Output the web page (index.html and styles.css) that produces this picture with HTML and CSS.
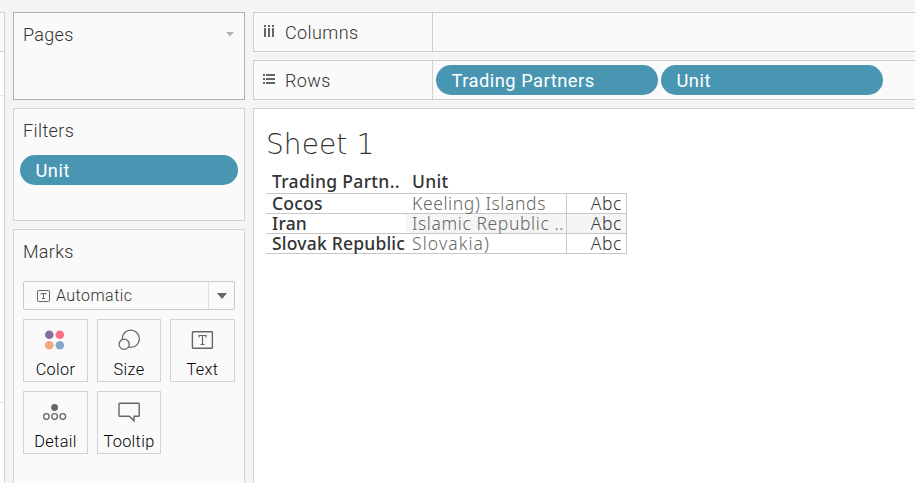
FILE: index.html
```
<!DOCTYPE html>
<html lang="en">
<head>
<meta charset="utf-8">
<title>Sheet 1</title>
<link rel="stylesheet" href="styles.css">
</head>
<body>
<div class="app">
  <aside class="edge"><div class="edge-head"></div><div class="edge-field"></div><div class="edge-list"></div></aside>
  <section class="side">
    <div class="panel pages"><h2>Pages</h2><svg class="caret" width="8" height="5" viewBox="0 0 8 5"><path d="M0 0h8L4 4.5z" fill="#b4b4b4"/></svg></div>
    <div class="panel filters"><h2 class="wide">Filters</h2><div class="pill">Unit</div></div>
    <div class="panel marks">
      <h2>Marks</h2>
      <div class="select">
        <svg width="13" height="12" viewBox="0 0 13 12"><rect x=".5" y=".5" width="12" height="11" rx=".7" fill="none" stroke="#666"/><path d="M4 4.5v-1h5v1M6.5 3.5v5M5 8.5h3" fill="none" stroke="#666"/></svg>
        <span class="select-label">Automatic</span>
        <span class="select-arrow"><svg width="10" height="6" viewBox="0 0 10 6"><path d="M0 0h10L5 6z" fill="#666"/></svg></span>
      </div>
      <div class="cards">
        <div class="card odd"><svg width="34" height="24" viewBox="0 0 34 24"><circle cx="11.3" cy="6.8" r="4.3" fill="#866f98"/><circle cx="21.8" cy="6.8" r="4.3" fill="#fb7080"/><circle cx="11.3" cy="17.3" r="4.3" fill="#f2a77d"/><circle cx="21.8" cy="17.3" r="4.3" fill="#82a6cd"/></svg><span>Color</span></div>
        <div class="card"><svg width="34" height="24" viewBox="0 0 34 24" fill="none" stroke="#666" stroke-width="1.3"><circle cx="18.8" cy="10.8" r="8.6"/><circle cx="12.2" cy="16.3" r="5.1" fill="#fafafa"/></svg><span>Size</span></div>
        <div class="card odd"><svg width="34" height="24" viewBox="0 0 34 24" fill="none" stroke="#666"><rect x="7.4" y="3.7" width="20" height="16.6" rx=".7" stroke-width="1.4"/><path d="M14 9.5v-2h7v2M17.5 7.5v9M15.5 16.5h4" stroke-width="1.2"/></svg><span>Text</span></div>
        <div class="card odd"><svg width="34" height="24" viewBox="0 0 34 24" fill="none" stroke="#666" stroke-width="1.3"><circle cx="16.6" cy="7.5" r="3.4" fill="#666" stroke="none"/><circle cx="8.4" cy="16.5" r="2.8"/><circle cx="16.6" cy="16.5" r="2.8"/><circle cx="24.8" cy="16.5" r="2.8"/></svg><span>Detail</span></div>
        <div class="card"><svg width="34" height="24" viewBox="0 0 34 24" fill="none" stroke="#666" stroke-width="1.4"><path d="M7.8 3.2h18.6q.8 0 .8.8v11.4q0 .8-.8.8H22v4.6l-4.7-4.6H7.8q-.8 0-.8-.8V4q0-.8.8-.8z"/></svg><span>Tooltip</span></div>
      </div>
    </div>
  </section>
  <main class="work">
    <div class="shelf"><div class="shelf-name"><svg width="14" height="14" viewBox="0 0 14 14" fill="#666"><path d="M2 1h2v2H2zM6 1h2v2H6zM10 1h2v2h-2zM2 4h2v9H2zM6 4h2v9H6zM10 4h2v9h-2z"/></svg><span>Columns</span></div><div class="shelf-drop"></div></div>
    <div class="shelf"><div class="shelf-name"><svg class="rows-icon" width="14" height="14" viewBox="0 0 14 14" fill="#666"><path d="M1 2h2v2H1zM1 6h2v2H1zM1 10h2v2H1zM4 2h9v2H4zM4 6h9v2H4zM4 10h9v2H4z"/></svg><span>Rows</span></div><div class="shelf-drop"><div class="pill">Trading Partners</div><div class="pill">Unit</div></div></div>
    <div class="sheet">
      <h1>Sheet 1</h1>
      <div class="grid">
        <div class="row head"><b>Trading Partn..</b><b>Unit</b></div>
        <div class="row"><b>Cocos</b><i>Keeling) Islands</i><em>Abc</em></div>
        <div class="row band"><b>Iran</b><i>Islamic Republic ..</i><em>Abc</em></div>
        <div class="row"><b>Slovak Republic</b><i class="loose">Slovakia)</i><em>Abc</em></div>
      </div>
    </div>
  </main>
</div>
</body>
</html>
```
FILE: styles.css
```
* { box-sizing: border-box; }
body { margin: 0; background: #f4f4f4; color: #333; font-family: "Roboto", "Liberation Sans", sans-serif; overflow: hidden; }
svg { display: block; flex: none; }
h1, h2 { margin: 0; }
.app { display: flex; width: 915px; height: 483px; padding-top: 12px; }
.edge { flex: none; width: 5px; margin-right: 8px; border: 1px solid #d0d0d0; border-width: 1px 1px 0 0; background: #fff; }
.edge-head { height: 39px; border-bottom: 1px solid #d0d0d0; background: #fafafa; }
.edge-field { height: 44px; border-bottom: 1px solid #e5e5e5; }
.edge-list { height: 307px; border-bottom: 1px solid #e0e0e0; }
.side { flex: none; width: 232px; margin-right: 8px; display: flex; flex-direction: column; }
.panel { background: #fafafa; border: 1px solid #d2d2d2; }
.panel h2 { font-size: 18px; font-weight: 300; line-height: 24px; padding: 10px 0 0 9px; letter-spacing: .3px; }
.panel h2.wide { letter-spacing: .4px; }
.pages { height: 88px; border-color: #b0b0b0; display: flex; justify-content: space-between; }
.caret { margin: 19px 10px 0 0; }
.filters { height: 113px; margin: 8px 0; }
.filters .pill { margin: 12px 6px 0; }
.marks { flex: 1; border-bottom: 0; }
.pill { height: 30px; border-radius: 15px; background: #4996b2; color: #fff; font-size: 18.3px; line-height: 31px; padding-left: 15.5px; letter-spacing: .5px; white-space: nowrap; }
.select { display: flex; align-items: center; height: 29px; margin: 17px 9px 0; border: 1px solid #c8c8c8; border-radius: 2px; padding-left: 13px; font-size: 16px; font-weight: 300; letter-spacing: .45px; }
.select-label { flex: 1; margin-left: 6px; }
.select-arrow { width: 26px; height: 27px; border-left: 1px solid #ddd; display: flex; align-items: center; padding-left: 8px; }
.cards { display: grid; grid-template-columns: 65px 64px 65px; grid-auto-rows: 63px; gap: 9px; margin: 9px 9px 0; }
.card { border: 1px solid #d2d2d2; display: flex; flex-direction: column; align-items: center; padding-top: 8px; color: #000; font-size: 16.3px; font-weight: 300; line-height: 20px; letter-spacing: .35px; }
.card span { margin-top: 8px; }
.card.odd svg { margin-right: 1px; }
.work { flex: 1; min-width: 0; display: flex; flex-direction: column; gap: 8px; }
.shelf { height: 40px; display: flex; border: 1px solid #d0d0d0; border-right: 0; background: #fafafa; }
.shelf-name { width: 178px; padding-left: 8px; display: flex; align-items: center; gap: 9px; font-size: 18px; font-weight: 300; letter-spacing: .4px; }
.shelf-name svg { margin-top: -2px; }
.shelf-drop { flex: 1; border-left: 1px solid #d0d0d0; display: flex; align-items: center; gap: 3px; padding-left: 3px; }
.shelf-drop .pill { width: 222px; }
.sheet { flex: 1; background: #fff; border: 1px solid #d0d0d0; border-width: 1px 0 0 1px; padding: 17px 0 0 12px; font-family: "Noto Sans", "Open Sans", sans-serif; }
.sheet h1 { font-family: "DejaVu Sans", sans-serif; font-size: 28px; font-weight: 200; line-height: 38px; letter-spacing: .1px; }
.grid { width: 361px; margin-top: 9px; }
.row { height: 20px; display: grid; grid-template-columns: 140px 160px 61px; border-bottom: 1px solid #c8c8c8; font-size: 17.5px; line-height: 18px; white-space: nowrap; }
.head { height: 21px; line-height: 17px; }
.row b { font-weight: 500; padding-left: 6px; letter-spacing: .2px; }
.head b { letter-spacing: .3px; }
.row i { font-style: normal; font-weight: 300; color: #666; padding-left: 6px; letter-spacing: .6px; }
.row i.loose { letter-spacing: 1.1px; }
.row em { font-style: normal; font-weight: 300; border: 1px solid #c8c8c8; border-width: 0 1px; padding-right: 4px; text-align: right; letter-spacing: .6px; }
.band i, .band em { background: #f5f5f5; }
```
